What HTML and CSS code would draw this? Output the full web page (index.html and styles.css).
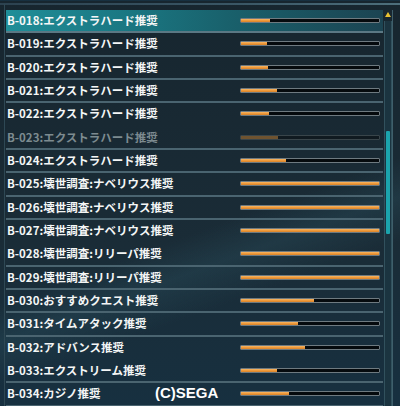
FILE: index.html
```html
<!DOCTYPE html>
<html lang="ja">
<head>
<meta charset="utf-8">
<link rel="stylesheet" href="styles.css">
</head>
<body>
<div class="frame">
  <div class="list">
    <div class="row active"><span class="label">B-018:エクストラハード推奨</span><span class="bar"><span class="fill" style="width:29px"></span></span></div>
    <div class="row"><span class="label">B-019:エクストラハード推奨</span><span class="bar"><span class="fill" style="width:26px"></span></span></div>
    <div class="row"><span class="label">B-020:エクストラハード推奨</span><span class="bar"><span class="fill" style="width:27px"></span></span></div>
    <div class="row"><span class="label">B-021:エクストラハード推奨</span><span class="bar"><span class="fill" style="width:36px"></span></span></div>
    <div class="row noline"><span class="label">B-022:エクストラハード推奨</span><span class="bar"><span class="fill" style="width:28px"></span></span></div>
    <div class="row dim"><span class="label">B-023:エクストラハード推奨</span><span class="bar"><span class="fill" style="width:37px"></span></span></div>
    <div class="row"><span class="label">B-024:エクストラハード推奨</span><span class="bar"><span class="fill" style="width:45px"></span></span></div>
    <div class="row"><span class="label">B-025:壊世調査:ナベリウス推奨</span><span class="bar"><span class="fill" style="width:140px"></span></span></div>
    <div class="row"><span class="label">B-026:壊世調査:ナベリウス推奨</span><span class="bar"><span class="fill" style="width:140px"></span></span></div>
    <div class="row noline"><span class="label">B-027:壊世調査:ナベリウス推奨</span><span class="bar"><span class="fill" style="width:140px"></span></span></div>
    <div class="row"><span class="label">B-028:壊世調査:リリーパ推奨</span><span class="bar"><span class="fill" style="width:140px"></span></span></div>
    <div class="row"><span class="label">B-029:壊世調査:リリーパ推奨</span><span class="bar"><span class="fill" style="width:140px"></span></span></div>
    <div class="row"><span class="label">B-030:おすすめクエスト推奨</span><span class="bar"><span class="fill" style="width:73px"></span></span></div>
    <div class="row"><span class="label">B-031:タイムアタック推奨</span><span class="bar"><span class="fill" style="width:57px"></span></span></div>
    <div class="row noline"><span class="label">B-032:アドバンス推奨</span><span class="bar"><span class="fill" style="width:64px"></span></span></div>
    <div class="row"><span class="label">B-033:エクストリーム推奨</span><span class="bar"><span class="fill" style="width:36px"></span></span></div>
    <div class="row"><span class="label">B-034:カジノ推奨</span><span class="bar"><span class="fill" style="width:48px"></span></span></div>
  </div>
  <div class="scroll">
    <div class="arrow"></div>
    <div class="track"><div class="thumb"></div></div>
  </div>
  <div class="copy">(C)SEGA</div>
</div>
</body>
</html>
```

FILE: styles.css
```css
* { box-sizing: border-box; }
html, body {
  margin: 0;
  padding: 0;
  width: 400px;
  height: 406px;
  overflow: hidden;
  background: #182833;
}
.frame {
  position: relative;
  width: 400px;
  height: 406px;
  display: flex;
  padding: 9px 3px 0 6px;
  border-top: 1px solid transparent;
  background:
    linear-gradient(160deg, rgba(40,80,95,0) 55%, rgba(50,95,110,0.25) 62%, rgba(40,80,95,0) 70%),
    linear-gradient(#17262f, #1a2c37 60%, #173040);
  font-family: "Noto Sans CJK JP", "Noto Sans", sans-serif;
}
.frame::before {
  content: "";
  position: absolute;
  left: 0;
  right: 0;
  top: 2px;
  height: 2px;
  background: linear-gradient(90deg, #2c4250, #3a5766 60%, #4d6f7c);
}
.frame::after {
  content: "";
  position: absolute;
  left: 4px;
  top: 3px;
  bottom: 0;
  width: 1px;
  background: #2e4854;
}
.list {
  flex: 1;
  display: flex;
  flex-direction: column;
}
.row {
  height: 23.33px;
  flex: none;
  display: flex;
  align-items: center;
  padding-left: 1px;
  padding-right: 3px;
  border-bottom: 2px solid #4a6470;
}
.row.noline { border-bottom-color: transparent; }
.row.active {
  background: linear-gradient(90deg, #1f8e98 0%, #1a7580 35%, #19606b 60%, #1c4452 100%);
  border-bottom-color: #5b7884;
}
.label {
  flex: 1;
  color: #f4f6f6;
  font-size: 11.5px;
  font-weight: 700;
  line-height: 14px;
  white-space: nowrap;
  letter-spacing: 0;
  padding-bottom: 1px;
}
.bar {
  width: 140px;
  height: 5px;
  flex: none;
  border: 1px solid #6e7a80;
  border-radius: 1px;
  background: #050a0d;
  display: flex;
}
.fill {
  height: 100%;
  background: linear-gradient(#f8b866, #ee9a3c 50%, #d98328);
}
.row.dim .label { color: #7d8b90; }
.row.dim .bar { border-color: #39454a; background: #101a20; }
.row.dim .fill { background: #6e5330; }
.scroll {
  width: 10px;
  flex: none;
  display: flex;
  flex-direction: column;
  align-items: center;
  margin-right: 4px;
  border-right: 1px solid #3f5f6b;
}
.arrow {
  width: 0;
  height: 0;
  margin-top: 2px;
  border-left: 3px solid transparent;
  border-right: 3px solid transparent;
  border-bottom: 5px solid #e8c132;
}
.track {
  flex: 1;
  width: 8px;
  margin-top: 4px;
  background: #1b3440;
  border-left: 1px solid #31515d;
  border-right: 1px solid #31515d;
  padding-top: 110px;
  display: flex;
  justify-content: center;
}
.thumb {
  width: 4px;
  height: 103px;
  background: #1ba4ad;
  border-radius: 1px;
}
.copy {
  position: absolute;
  left: 155px;
  top: 383px;
  color: #ffffff;
  font-family: "Liberation Sans", Arial, sans-serif;
  font-weight: 700;
  font-size: 15px;
  line-height: 17px;
}
```
